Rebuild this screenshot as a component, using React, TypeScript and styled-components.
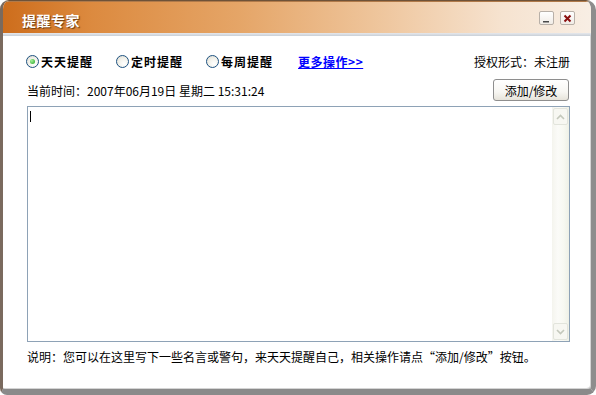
import React from "react";
import styled, { createGlobalStyle } from "styled-components";

const Global = createGlobalStyle`
  html, body { margin: 0; padding: 0; background: #ffffff; }
  body { font-family: "Noto Sans CJK SC", "Noto Sans", sans-serif; font-size: 12px; color: #000; }
  * { box-sizing: border-box; }
`;

const Window = styled.div`
  width: 596px;
  height: 395px;
  display: flex;
  flex-direction: column;
  border-style: solid;
  border-width: 1px 5px 6px 3px;
  border-color: #6e5238 #8d8d8d #8a8a8a #7a6a5e;
  border-radius: 9px 10px 9px 7px;
  background: #ffffff;
  overflow: hidden;
  box-shadow: inset -1px -1px 0 #d4d4d4;
`;

const TitleBar = styled.div`
  height: 32px;
  flex: none;
  display: flex;
  align-items: center;
  justify-content: space-between;
  padding: 4px 16px 0 19px;
  background: linear-gradient(to right, #cd6d1c 0%, #dc8a3f 15%, #e5a567 40%, #efc79f 65%, #f6e3d0 85%, #f8eee4 100%);
  border-top: 1px solid #b07a4a;
`;

const Title = styled.div`
  font-size: 14px;
  font-weight: bold;
  color: #ffffff;
  letter-spacing: 0.5px;
  text-shadow: 1px 1px 1px #6a3a10;
`;

const TitleButtons = styled.div`
  display: flex;
  gap: 6px;
  margin-top: -3px;
`;

const TitleButton = styled.div<{ $close?: boolean }>`
  width: 15px;
  height: 14px;
  border: 1px solid #b8b0a8;
  border-radius: 2px;
  background: linear-gradient(#ffffff, #f1ece6);
  display: flex;
  align-items: center;
  justify-content: center;
`;

const TitleSeparator = styled.div`
  height: 3px;
  flex: none;
  background: linear-gradient(#e6e8ec, #c9d0d8);
`;

const Body = styled.div`
  flex: 1;
  display: flex;
  flex-direction: column;
  padding: 15px 21px 0 23px;
`;

const OptionRow = styled.div`
  height: 20px;
  display: flex;
  align-items: center;
`;

const RadioGroup = styled.div`
  display: flex;
  align-items: center;
  gap: 23px;
`;

const RadioItem = styled.label`
  display: flex;
  align-items: center;
  gap: 2px;
  font-weight: bold;
  font-size: 12px;
  letter-spacing: 1px;
`;

const RadioCircle = styled.span<{ $checked?: boolean }>`
  width: 13px;
  height: 13px;
  border-radius: 50%;
  border: 1px solid #1c5180;
  background: radial-gradient(circle at 65% 70%, #ffffff 0%, #f2f1ea 50%, #dcdad0 100%);
  display: flex;
  align-items: center;
  justify-content: center;
  &::after {
    content: "";
    display: ${(p) => (p.$checked ? "block" : "none")};
    width: 5px;
    height: 5px;
    border-radius: 50%;
    background: radial-gradient(circle at 35% 35%, #a6f29a, #21a121);
  }
`;

const MoreLink = styled.a`
  margin-left: 25px;
  color: #0000ff;
  font-weight: bold;
  text-decoration: underline;
  letter-spacing: 0.5px;
  cursor: pointer;
`;

const License = styled.div`
  margin-left: auto;
  color: #000;
`;

const TimeRow = styled.div`
  margin-top: 8px;
  height: 22px;
  display: flex;
  align-items: center;
  justify-content: space-between;
  padding-left: 1px;
`;

const XPButton = styled.button`
  width: 76px;
  height: 22px;
  padding: 0;
  font-family: inherit;
  font-size: 12px;
  color: #000;
  border: 1px solid #8e8e8e;
  border-radius: 3px;
  background: linear-gradient(#ffffff 0%, #f7f6f2 60%, #e6e3da 100%);
  margin-right: 1px;
`;

const Editor = styled.div`
  margin-top: 5px;
  height: 236px;
  display: flex;
  border: 1px solid #8ea2b6;
  margin-left: 1px;
`;

const EditArea = styled.div`
  flex: 1;
  padding: 4px 2px;
`;

const Caret = styled.div`
  width: 1px;
  height: 11px;
  background: #000;
`;

const ScrollBar = styled.div`
  width: 17px;
  display: flex;
  flex-direction: column;
  background: linear-gradient(to right, #f4f4ee 0%, #fbfbf8 35%, #f7f8f1 70%, #eef0e6 100%);
`;

const ScrollArrow = styled.div`
  height: 17px;
  margin: 1px;
  border: 1px solid #e2e4dc;
  border-radius: 2px;
  background: #f7f7f2;
  display: flex;
  align-items: center;
  justify-content: center;
`;

const Track = styled.div`
  flex: 1;
`;

const Note = styled.div`
  margin-top: 6px;
  height: 18px;
  line-height: 18px;
  padding-left: 1px;
`;

const Chevron = ({ up }: { up?: boolean }) => (
  <svg width="9" height="6" viewBox="0 0 9 6">
    <polyline
      points={up ? "1,5 4.5,1.5 8,5" : "1,1 4.5,4.5 8,1"}
      fill="none"
      stroke="#c4c8bc"
      strokeWidth="1.6"
    />
  </svg>
);

export default function App() {
  return (
    <>
      <Global />
      <Window>
        <TitleBar>
          <Title>提醒专家</Title>
          <TitleButtons>
            <TitleButton>
              <svg width="9" height="9" viewBox="0 0 9 9">
                <rect x="1" y="7" width="6" height="1.5" fill="#4a4a4a" />
              </svg>
            </TitleButton>
            <TitleButton $close>
              <svg width="9" height="9" viewBox="0 0 9 9">
                <path d="M1.5 1.5 L7.5 7.5 M7.5 1.5 L1.5 7.5" stroke="#8a1010" strokeWidth="2" />
              </svg>
            </TitleButton>
          </TitleButtons>
        </TitleBar>
        <TitleSeparator />
        <Body>
          <OptionRow>
            <RadioGroup>
              <RadioItem>
                <RadioCircle $checked />
                天天提醒
              </RadioItem>
              <RadioItem>
                <RadioCircle />
                定时提醒
              </RadioItem>
              <RadioItem>
                <RadioCircle />
                每周提醒
              </RadioItem>
            </RadioGroup>
            <MoreLink>更多操作&gt;&gt;</MoreLink>
            <License>授权形式：未注册</License>
          </OptionRow>
          <TimeRow>
            <span>当前时间：2007年06月19日 星期二 15:31:24</span>
            <XPButton>添加/修改</XPButton>
          </TimeRow>
          <Editor>
            <EditArea>
              <Caret />
            </EditArea>
            <ScrollBar>
              <ScrollArrow>
                <Chevron up />
              </ScrollArrow>
              <Track />
              <ScrollArrow>
                <Chevron />
              </ScrollArrow>
            </ScrollBar>
          </Editor>
          <Note>说明：您可以在这里写下一些名言或警句，来天天提醒自己，相关操作请点“添加/修改”按钮。</Note>
        </Body>
      </Window>
    </>
  );
}
